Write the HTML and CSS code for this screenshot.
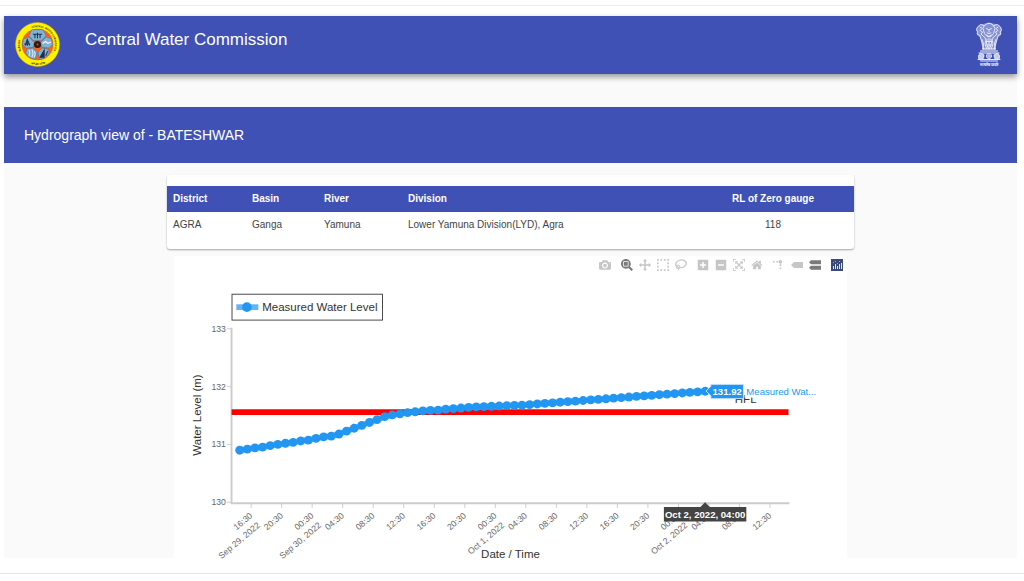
FILE: index.html
```html
<!DOCTYPE html>
<html lang="en">
<head>
    <title>Central Water Commission</title>
    <meta charset="utf-8">
    <meta name="viewport" content="width=device-width, initial-scale=1.0">
    <link rel="stylesheet" href="styles.css">
</head>

<body>
<div class="frame">
    <div class="app">
        <header class="toolbar">
            <svg class="logo" viewBox="0 0 88 88" aria-hidden="true">
                <defs>
                    <path id="ringTop" d="M14.500 61 A34 34 0 1 1 73.500 61"/>
                    <path id="ringBottom" d="M14 70 A40 40 0 0 0 74 70"/>
                </defs>
                <circle cx="44" cy="44" r="43" fill="#fff200" stroke="#d9b400" stroke-width="1"/>
                <circle cx="44" cy="44" r="31" fill="#f26522"/>
                <g fill="#7fb2d6" stroke="#4b6f92" stroke-width="1">
                    <path d="M33 15l22 0 6 12-9 9-16 0-9-9z"/>
                    <path d="M61 29l10 4 3 11-8 7-14-2-2-9z"/>
                    <path d="M27 29l-10 4-3 11 8 7 14-2 2-9z"/>
                    <path d="M23 53l12-2 8 8-3 14-11-3-8-9z"/>
                    <path d="M65 53l-12-2-8 8 3 14 11-3 8-9z"/>
                </g>
                <g fill="none" stroke="#1e3247" stroke-width="2">
                    <path d="M35 24h18M39 24v8M44 21v11M49 24v8"/>
                    <path d="M24 47v-13M20 46l4-12 5 12M18 43h11"/>
                    <path d="M54 42l6-4 4 4 6-3" stroke="#fff"/>
                    <path d="M27 54q4 6 0 13M33 54q4 7 0 15M38 57q3 6 0 12" stroke="#d8edf8"/>
                    <path d="M49 69l8-14v14zM60 66l4-9" fill="#1e3247"/>
                </g>
                <circle cx="44" cy="44" r="7" fill="#2b1a16"/>
                <circle cx="44" cy="44" r="2" fill="#d94a22"/>
                <g class="logo-text">
                    <text><textPath href="#ringTop" startOffset="4%">केन्द्रीय जल</textPath></text>
                    <text><textPath href="#ringTop" startOffset="42%">CENTRAL WATER COMMISSION</textPath></text>
                    <text><textPath href="#ringBottom" startOffset="30%">जल और जीवन</textPath></text>
                </g>
            </svg>
            <h1 class="title">Central Water Commission</h1>
            <svg class="emblem" viewBox="0 0 52 90" aria-hidden="true">
                <g fill="none" stroke="#e4e7f6" stroke-width="2" stroke-linecap="round" stroke-linejoin="round">
                    <path stroke="none" fill="#8591d0" d="M9 5l9-2 8-2 8 2 9 2 6 5 2 8-2 9-6 5-4 23H13L9 32l-6-5-2-9 2-8z"/>
                    <path d="M18 6q8-7 16 0l4 7-3 10-5 6h-8l-5-6-3-10z"/>
                    <path d="M16 7l-7-2-6 5-2 6 3 4-2 4 6 3 2 8 3 9 2 10"/>
                    <path d="M36 7l7-2 6 5 2 6-3 4 2 4-6 3-2 8-3 9-2 10"/>
                    <path d="M21 13l4 2M31 13l-4 2M26 15v5M22 22q4 3 8 0M21 26l5 3 5-3"/>
                    <path d="M8 10l4 3-4 4 5 3-3 4 5 5M44 10l-4 3 4 4-5 3 3 4-5 5"/>
                    <path d="M17 30l3 6-2 7 3 10M35 30l-3 6 2 7-3 10M26 32v22M22 34l-1 8 3 10M30 34l1 8-3 10"/>
                    <path d="M12 35l3 8-1 10M40 35l-3 8 1 10M20 39h12M21 46h10"/>
                    <path d="M13 54h26M9 58h34M6 62h40" stroke="#ffffff"/>
                    <circle cx="26" cy="68" r="5"/>
                    <path d="M26 64v8M22 68h8"/>
                    <path d="M5 72q-1-9 6-9l5 3-1 6zM47 72q1-9-6-9l-5 3 1 6z" fill="#c5cbea"/>
                    <path d="M4 75h44M9 78h34"/>
                </g>
                <text x="26" y="88" class="emblem-text">सत्यमेव जयते</text>
            </svg>
        </header>

        <h2 class="subtitle">Hydrograph view of - BATESHWAR</h2>

        <main>
            <section class="card">
                <table class="station">
                    <thead>
                        <tr>
                            <th class="district">District</th>
                            <th class="basin">Basin</th>
                            <th class="river">River</th>
                            <th>Division</th>
                            <th class="gauge">RL of Zero gauge</th>
                        </tr>
                    </thead>
                    <tbody>
                        <tr>
                            <td>AGRA</td>
                            <td>Ganga</td>
                            <td>Yamuna</td>
                            <td>Lower Yamuna Division(LYD), Agra</td>
                            <td class="gauge">118</td>
                        </tr>
                    </tbody>
                </table>
            </section>

            <section class="chart">
                <div class="modebar">
                    <div class="group">
                        <button aria-label="Download plot as a png"><svg viewBox="0 0 1000 1000"><path transform="matrix(1 0 0 -1 0 850)" d="m500 450c-83 0-150-67-150-150 0-83 67-150 150-150 83 0 150 67 150 150 0 83-67 150-150 150z m400 150h-120c-16 0-34 13-39 29l-31 93c-6 15-23 28-40 28h-340c-16 0-34-13-39-28l-31-94c-6-15-23-28-40-28h-120c-55 0-100-45-100-100v-450c0-55 45-100 100-100h800c55 0 100 45 100 100v450c0 55-45 100-100 100z m-400-550c-138 0-250 112-250 250 0 138 112 250 250 250 138 0 250-112 250-250 0-138-112-250-250-250z m365 380c-19 0-35 16-35 35 0 19 16 35 35 35 19 0 35-16 35-35 0-19-16-35-35-35z"/></svg></button>
                    </div>
                    <div class="group">
                        <button class="active" aria-label="Zoom"><svg viewBox="0 0 1000 1000"><path transform="matrix(1 0 0 -1 0 850)" d="m1000-25l-250 251c40 63 63 138 63 218 0 224-182 406-407 406-224 0-406-182-406-406s183-406 407-406c80 0 155 22 218 62l250-250 125 125z m-812 250l0 438 437 0 0-438-437 0z m62 375l313 0 0-312-313 0 0 312z"/></svg></button>
                        <button aria-label="Pan"><svg viewBox="0 0 1000 1000"><path transform="matrix(1 0 0 -1 0 850)" d="m1000 350l-187 188 0-125-250 0 0 250 125 0-188 187-187-187 125 0 0-250-250 0 0 125-188-188 186-187 0 125 252 0 0-250-125 0 187-188 188 188-125 0 0 250 250 0 0-126 187 188z"/></svg></button>
                        <button aria-label="Box Select"><svg viewBox="0 0 1000 1000"><path d="M0 0h143v143H0zM286 0h143v143H286zM571 0h143v143H571zM857 0h143v143H857zM0 286h143v143H0zM857 286h143v143H857zM0 571h143v143H0zM857 571h143v143H857zM0 857h143v143H0zM286 857h143v143H286zM571 857h143v143H571zM857 857h143v143H857z"/></svg></button>
                        <button aria-label="Lasso Select"><svg viewBox="0 0 1031 1000"><path transform="matrix(1 0 0 -1 0 850)" d="m1018 538c-36 207-290 336-568 286-277-48-473-256-436-463 10-57 36-108 76-151-13-66 11-137 68-183 34-28 75-41 114-42l-55-70 0 0c-2-1-3-2-4-3-10-14-8-34 5-45 14-11 34-8 45 4 1 1 2 3 2 5l0 0 113 140c16 11 31 24 45 40 4 3 6 7 8 11 48-3 100 0 151 9 278 48 473 255 436 462z m-624-379c-80 14-149 48-197 96 42 42 109 47 156 9 33-26 47-66 41-105z m-187-74c-19 16-33 37-39 60 50-32 109-55 174-68-42-25-95-24-135 8z m360 75c-34-7-69-9-102-8 8 62-16 128-68 170-73 59-175 54-244-5-9 20-16 40-20 61-28 159 121 317 333 354s407-60 434-217c28-159-121-318-333-355z"/></svg></button>
                    </div>
                    <div class="group">
                        <button aria-label="Zoom in"><svg viewBox="0 0 875 1000"><path transform="matrix(1 0 0 -1 0 850)" d="m1 787l0-875 875 0 0 875-875 0z m687-500l-187 0 0-187-125 0 0 187-188 0 0 125 188 0 0 187 125 0 0-187 187 0 0-125z"/></svg></button>
                        <button aria-label="Zoom out"><svg viewBox="0 0 875 1000"><path transform="matrix(1 0 0 -1 0 850)" d="m0 788l0-876 875 0 0 876-875 0z m688-500l-500 0 0 125 500 0 0-125z"/></svg></button>
                        <button aria-label="Autoscale"><svg viewBox="0 0 1000 1000"><path transform="matrix(1 0 0 -1 0 850)" d="m250 850l-187 0-63 0 0-62 0-188 63 0 0 188 187 0 0 62z m688 0l-188 0 0-62 188 0 0-188 62 0 0 188 0 62-62 0z m-875-938l0 188-63 0 0-188 0-62 63 0 187 0 0 62-187 0z m875 188l0-188-188 0 0-62 188 0 62 0 0 62 0 188-62 0z m-125 188l-1 0-93-94-156 156 156 156 92-93 2 0 0 250-250 0 0-2 93-92-156-156-156 156 94 92 0 2-250 0 0-250 0 0 93 93 157-156-157-156-93 94 0 0 0-250 250 0 0 0-94 93 156 157 156-157-93-93 0 0 250 0 0 250z"/></svg></button>
                        <button aria-label="Reset axes"><svg viewBox="0 0 928 1000"><path transform="matrix(1 0 0 -1 0 850)" d="m786 296v-267q0-15-11-26t-25-10h-214v214h-143v-214h-214q-15 0-25 10t-11 26v267q0 1 0 2t0 2l321 264 321-264q1-1 1-4z m124 39l-34-41q-5-5-12-6h-2q-7 0-12 3l-386 322-386-322q-7-4-13-4-7 2-12 7l-35 41q-4 5-3 13t6 12l401 334q18 15 42 15t43-15l136-114v109q0 8 5 13t13 5h107q8 0 13-5t5-13v-227l122-102q5-5 6-12t-4-13z"/></svg></button>
                    </div>
                    <div class="group">
                        <button aria-label="Toggle Spike Lines"><svg viewBox="0 0 1000 1000"><path transform="matrix(1.5 0 0 -1.5 0 850)" d="M512 409c0-57-46-104-103-104-57 0-104 47-104 104 0 57 47 103 104 103 57 0 103-46 103-103z m-327-39l92 0 0 92-92 0z m-185 0l92 0 0 92-92 0z m370-186l92 0 0 93-92 0z m0-184l92 0 0 92-92 0z"/></svg></button>
                        <button aria-label="Show closest data on hover"><svg viewBox="0 0 1500 1000"><path transform="matrix(1 0 0 -1 0 850)" d="m375 725l0 0-375-375 375-374 0-1 1125 0 0 750-1125 0z"/></svg></button>
                        <button class="active" aria-label="Compare data on hover"><svg viewBox="0 0 1125 1000"><path transform="matrix(1 0 0 -1 0 850)" d="m187 786l0 2-187-188 188-187 0 0 937 0 0 373-938 0z m0-499l0 1-187-188 188-188 0 0 937 0 0 376-938-1z"/></svg></button>
                    </div>
                    <div class="group">
                        <a href="#" aria-label="Produced with Plotly"><svg viewBox="0 0 12 12"><path fill="#3a4a7c" d="M0 0h12v12H0z"/><path stroke="#dfe6f5" d="M2.500 7v3M4.500 5v5M6.500 7v3M8.500 5v5M10.500 4v6"/><path stroke="#7fa3d6" d="M2 3.500h1M4 2.500h1M6 4.500h1M8 2.500h1"/></svg></a>
                    </div>
                </div>

                <svg class="plot" viewBox="0 0 702 294" role="img" aria-label="Measured Water Level">
                    <rect class="legend-box" x="60.500" y="19" width="157" height="27"/>
                    <path class="trace" d="M65 32.500h23"/>
                    <circle class="point" cx="76" cy="32.500" r="5"/>
                    <text class="label" x="92" y="37">Measured Water Level</text>

                    <g id="axes">
                        <path class="axis" d="M60 54V237H642"/>
                    </g>
                    <path class="hfl" d="M60 142H641"/>
                    <g id="series"></g>

                    <text class="label" x="585" y="132">HFL</text>
                    <text class="label middle" transform="translate(28 145) rotate(-90)">Water Level (m)</text>
                    <text class="label middle" x="351" y="294">Date / Time</text>

                    <!-- hover labels -->
                    <path class="hover-value" d="M555 120l5-5v-2h34v15h-34v-3z"/>
                    <text class="hover-text middle" x="577" y="124">131.92</text>
                    <text class="hover-name" x="597" y="124">Measured Wat...</text>
                    <path class="hover-date" d="M554 236l5 5h38v15h-86v-15h38z"/>
                    <text class="hover-text middle" x="554" y="252">Oct 2, 2022, 04:00</text>
                </svg>
            </section>
        </main>
    </div>
</div>
<script src="script.js"></script>
</body>
</html>
```
FILE: styles.css
```css
* {
    box-sizing: border-box;
}

body {
    margin: 0;
    background-color: #ffffff;
    font-family: "Liberation Sans", Arial, sans-serif;
}

.frame {
    margin-top: 5px;
    padding: 10px 7px 15px 4px;
    border-top: 1px solid #ebebeb;
    border-bottom: 1px solid #e6e6e6;
}

.app {
    background-color: #fafafa;
}

/* Header */
.toolbar {
    display: flex;
    align-items: flex-start;
    height: 58px;
    padding: 6px 15px 6px 11px;
    background-color: #3f51b5;
    color: #ffffff;
    box-shadow: 0 3px 6px rgba(0, 0, 0, 0.4);
}

.logo {
    width: 45px;
    height: 45px;
}

.logo-text {
    font-size: 5px;
    font-weight: bold;
    fill: #2d2a10;
}

.title {
    flex: 1;
    margin: 0 0 0 25px;
    font-size: 17px;
    line-height: 36px;
    font-weight: normal;
}

.emblem {
    width: 26px;
    height: 45px;
}

.emblem-text {
    font-size: 8px;
    font-weight: bold;
    fill: #ffffff;
    text-anchor: middle;
}

.subtitle {
    margin: 33px 0 0;
    padding: 0 20px;
    background-color: #3f51b5;
    color: #ffffff;
    font-size: 14px;
    line-height: 56px;
    font-weight: normal;
}

/* Station details */
.card {
    max-width: 687px;
    margin: 12px auto 7px;
    padding: 11px 0;
    background-color: #ffffff;
    border-radius: 3px;
    box-shadow: 0 1px 2px rgba(0, 0, 0, 0.35);
}

.station {
    width: 100%;
    border-collapse: collapse;
    table-layout: fixed;
    font-size: 10px;
    line-height: 26px;
    color: #444444;
}

.station th,
.station td {
    padding: 0 6px;
    text-align: left;
}

.station th {
    background-color: #3f51b5;
    color: #ffffff;
}

.station .district {
    width: 79px;
}

.station .basin {
    width: 72px;
}

.station .river {
    width: 84px;
}

.station .gauge {
    width: 162px;
    text-align: center;
}

/* Chart */
.chart {
    max-width: 673px;
    margin: 0 auto;
    background-color: #ffffff;
}

.modebar {
    display: flex;
    justify-content: flex-end;
    gap: 4px;
    height: 20px;
    padding: 0 1px 2px 0;
}

.group {
    display: flex;
}

.group button,
.group a {
    display: flex;
    align-items: center;
    justify-content: center;
    width: 18px;
    padding: 0;
    border: none;
    background: none;
    fill: #c6c6c6;
    cursor: pointer;
}

.group button:hover,
.group .active {
    fill: #7a7a7a;
}

.group svg {
    width: 12px;
    height: 12px;
}

.plot {
    display: block;
    width: 100%;
    overflow: visible;
}

.axis,
.tick {
    fill: none;
    stroke: #cccccc;
    stroke-width: 2px;
}

.tick {
    stroke-width: 1px;
}

.tick-text {
    font-size: 9px;
    fill: #666666;
    text-anchor: end;
}

.label {
    font-size: 12px;
    fill: #333333;
}

.middle {
    text-anchor: middle;
}

.legend-box {
    fill: #ffffff;
    stroke: #444444;
}

.hfl {
    stroke: #ff0000;
    stroke-width: 6px;
}

.trace {
    fill: none;
    stroke: #2196f3;
    stroke-width: 6px;
    opacity: 0.7;
}

.point {
    fill: #2196f3;
}

.hover-value {
    fill: #2196f3;
    stroke: #d3eafd;
}

.hover-date {
    fill: #444444;
}

.hover-text {
    font-size: 10px;
    font-weight: bold;
    fill: #ffffff;
}

.hover-name {
    font-size: 10px;
    fill: #2196f3;
    stroke: #ffffff;
    stroke-width: 5px;
    paint-order: stroke;
}
```
FILE: script.js
```js
const SVG_NS = "http://www.w3.org/2000/svg";
const axes = document.getElementById("axes");
const series = document.getElementById("series");

// hourly readings, Sep 29 15:00 onwards
const levels = [
    130.9, 130.92, 130.94, 130.955, 130.98, 131, 131.02, 131.035, 131.06,
    131.075, 131.105, 131.13, 131.145, 131.18, 131.23, 131.28, 131.33, 131.38,
    131.43, 131.48, 131.51, 131.53, 131.55, 131.565, 131.58, 131.59, 131.595,
    131.61, 131.62, 131.63, 131.64, 131.65, 131.655, 131.66, 131.665, 131.67,
    131.675, 131.68
];
while (levels.length < 62) {
    levels.push(levels[levels.length - 1] + 0.01);
}

const dates = { 0: "Sep 29, 2022", 2: "Sep 30, 2022", 8: "Oct 1, 2022", 14: "Oct 2, 2022" };
const hours = ["16:30", "20:30", "00:30", "04:30", "08:30", "12:30"];

const xPos = (hour) => 68.5 + hour * 7.96;
const yPos = (level) => 236 - (level - 130) * 60.3;

function add(parent, name, attrs, text) {
    const el = document.createElementNS(SVG_NS, name);
    for (const key in attrs) {
        el.setAttribute(key, attrs[key]);
    }
    if (text) {
        el.textContent = text;
    }
    parent.appendChild(el);
}

for (let level = 130; level <= 133; level++) {
    const y = yPos(level);
    add(axes, "path", { class: "tick", d: `M55 ${y}h5` });
    add(axes, "text", { class: "tick-text", x: 54, y: y + 3 }, String(level));
}

for (let i = 0; i < 18; i++) {
    const x = xPos(1.5 + i * 4);
    add(axes, "path", { class: "tick", d: `M${x} 237v5` });
    const transform = `translate(${x + 2} 251) rotate(-40)`;
    add(axes, "text", { class: "tick-text", transform }, hours[i % 6]);
    if (dates[i]) {
        const shifted = `translate(${x + 10} 261) rotate(-40)`;
        add(axes, "text", { class: "tick-text", transform: shifted }, dates[i]);
    }
}

const line = levels.map((level, i) => `${xPos(i)},${yPos(level)}`).join(" ");
add(series, "polyline", { class: "trace", points: line });
levels.forEach((level, i) => {
    add(series, "circle", { class: "point", cx: xPos(i), cy: yPos(level), r: 4.6 });
});
```
